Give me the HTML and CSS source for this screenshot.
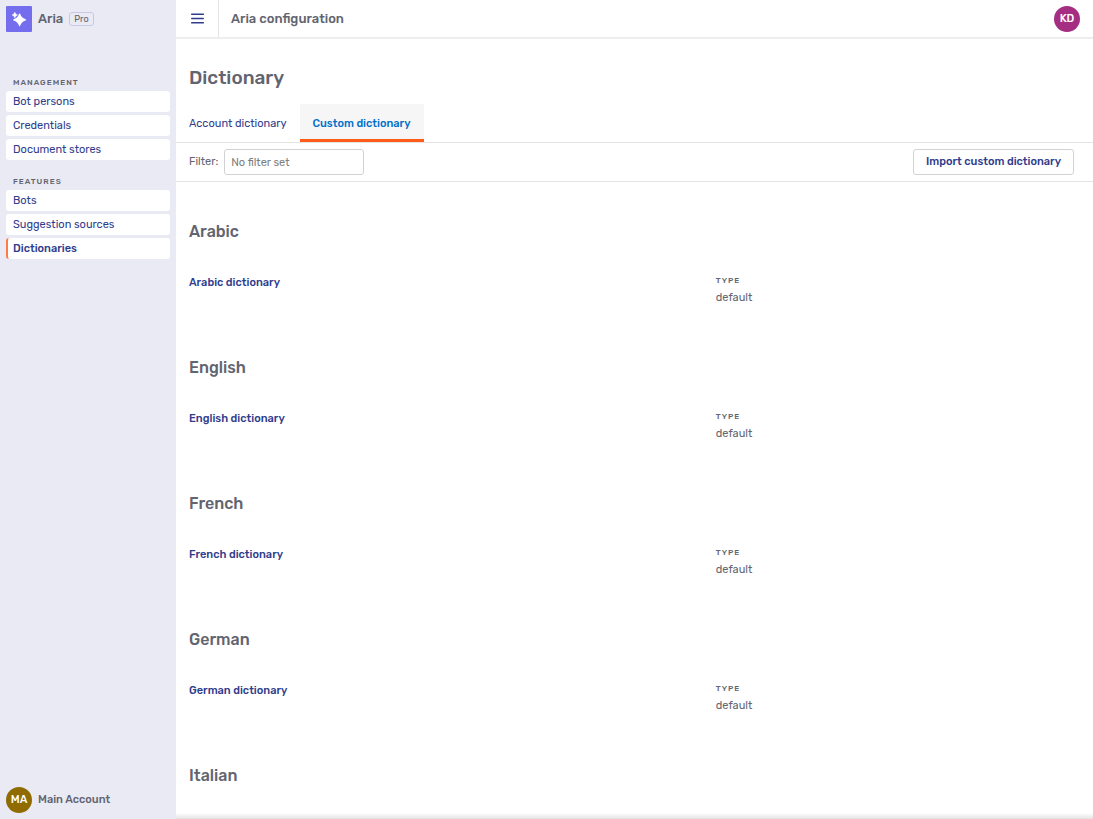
FILE: index.html
```html
<!DOCTYPE html>
<html lang="en">
  <head>
    <meta charset="utf-8">
    <title>Aria configuration</title>
    <link rel="stylesheet" href="styles.css">
  </head>
  <body>
    <aside class="sidebar">
      <div class="brand">
        <svg class="logo" viewBox="0 0 26 26" aria-hidden="true">
          <rect width="26" height="26" rx="1" fill="#746eee" />
          <path d="M13.6 8Q14.9 12.5 19.4 13.8Q14.9 15.1 13.6 19.6Q12.3 15.1 7.8 13.8Q12.3 12.5 13.6 8Z" fill="#fff" stroke="#fff" stroke-width="1.2" stroke-linejoin="round" />
          <path d="M8.8 6.2Q9.3 8.4 11.5 9Q9.3 9.6 8.8 11.8Q8.3 9.6 6.1 9Q8.3 8.4 8.8 6.2Z" fill="#fff" stroke="#fff" stroke-width="0.5" />
        </svg>
        <span class="brand-name">Aria</span>
        <span class="badge">Pro</span>
      </div>

      <nav class="menu">
        <h2 class="label">Management</h2>
        <ul>
          <li><a href="#">Bot persons</a></li>
          <li><a href="#">Credentials</a></li>
          <li><a href="#">Document stores</a></li>
        </ul>
        <h2 class="label">Features</h2>
        <ul>
          <li><a href="#">Bots</a></li>
          <li><a href="#">Suggestion sources</a></li>
          <li><a class="active" href="#">Dictionaries</a></li>
        </ul>
      </nav>

      <div class="account">
        <span class="avatar avatar-account">MA</span>
        <span>Main Account</span>
      </div>
    </aside>

    <div class="page">
      <header class="topbar">
        <button class="menu-btn" aria-label="Menu">
          <svg viewBox="0 0 13 11" aria-hidden="true">
            <path d="M0.7 1.2h11.6M0.7 5.5h11.6M0.7 9.8h11.6" stroke="#303c8c" stroke-width="1.5" stroke-linecap="round" />
          </svg>
        </button>
        <span class="topbar-title">Aria configuration</span>
        <span class="avatar avatar-user">KD</span>
      </header>

      <main class="content">
        <h1>Dictionary</h1>

        <nav class="tabs">
          <a href="#">Account dictionary</a>
          <a class="active" href="#">Custom dictionary</a>
        </nav>

        <div class="toolbar">
          <label for="filter">Filter:</label>
          <input id="filter" type="text" placeholder="No filter set">
          <button class="import-btn">Import custom dictionary</button>
        </div>

        <section class="language">
          <h2>Arabic</h2>
          <div class="row">
            <a href="#">Arabic dictionary</a>
            <dl>
              <dt class="label">Type</dt>
              <dd>default</dd>
            </dl>
          </div>
        </section>

        <section class="language">
          <h2>English</h2>
          <div class="row">
            <a href="#">English dictionary</a>
            <dl>
              <dt class="label">Type</dt>
              <dd>default</dd>
            </dl>
          </div>
        </section>

        <section class="language">
          <h2>French</h2>
          <div class="row">
            <a href="#">French dictionary</a>
            <dl>
              <dt class="label">Type</dt>
              <dd>default</dd>
            </dl>
          </div>
        </section>

        <section class="language">
          <h2>German</h2>
          <div class="row">
            <a href="#">German dictionary</a>
            <dl>
              <dt class="label">Type</dt>
              <dd>default</dd>
            </dl>
          </div>
        </section>

        <section class="language">
          <h2>Italian</h2>
        </section>
      </main>
    </div>
  </body>
</html>
```

FILE: styles.css
```css
* {
  box-sizing: border-box;
}

body {
  display: flex;
  height: 100vh;
  margin: 0;
  background-color: #fff;
  color: #62646f;
  font-family: Rubik, Roboto, sans-serif;
  font-size: 11px;
  line-height: 16px;
}

h1,
h2,
ul,
dl,
dd {
  margin: 0;
  padding: 0;
}

ul {
  list-style: none;
}

a {
  color: #303c8c;
  text-decoration: none;
}

button,
input {
  font: inherit;
}

.label {
  font-size: 8px;
  font-weight: 500;
  line-height: 12px;
  letter-spacing: 1px;
  text-transform: uppercase;
}

.avatar {
  display: flex;
  align-items: center;
  justify-content: center;
  width: 26px;
  height: 26px;
  border-radius: 50%;
  color: #fff;
  font-weight: 500;
}

.avatar-account {
  background-color: #8f6b00;
}

.avatar-user {
  margin-left: auto;
  background-color: #a52e82;
}

/* sidebar */

.sidebar {
  display: flex;
  flex-direction: column;
  flex: none;
  width: 176px;
  padding: 6px;
  background-color: #eaeaf5;
}

.brand,
.account {
  display: flex;
  align-items: center;
  gap: 6px;
}

.account {
  margin-top: auto;
  font-weight: 500;
}

.logo {
  width: 26px;
  height: 26px;
}

.brand-name {
  font-size: 13px;
  font-weight: 500;
}

.badge {
  padding: 0 4px;
  border: 1px solid #c6c9e6;
  border-radius: 3px;
  font-size: 9px;
  line-height: 12px;
}

.menu {
  margin-top: 45px;

  .label {
    padding-left: 7px;
    margin-bottom: 2px;
  }

  ul {
    display: grid;
    gap: 3px;
    margin-bottom: 16px;
  }

  a {
    display: block;
    padding: 3px 7px 2px;
    border-radius: 3px;
    background-color: #fff;
  }

  .active {
    padding-left: 5px;
    border-left: 2px solid #ff7a45;
    font-weight: 500;
  }
}

/* page */

.page {
  display: flex;
  flex-direction: column;
  flex: 1;
  min-width: 0;
}

.topbar {
  display: flex;
  align-items: center;
  flex: none;
  height: 39px;
  padding-right: 13px;
  border-bottom: 2px solid #eee;
}

.menu-btn {
  display: flex;
  align-items: center;
  align-self: stretch;
  justify-content: center;
  width: 43px;
  padding: 0;
  border: 0;
  border-right: 1px solid #e4e4e4;
  background: none;

  svg {
    width: 13px;
    height: 11px;
  }
}

.topbar-title {
  padding-left: 12px;
  font-size: 13px;
  font-weight: 500;
}

.content {
  flex: 1;
  overflow-y: auto;
  scrollbar-width: none;
}

.page::after {
  content: "";
  position: fixed;
  right: 0;
  bottom: 0;
  left: 176px;
  height: 6px;
  background: linear-gradient(transparent, #e2e2e2);
}

h1 {
  padding: 25px 13px 12px;
  font-size: 19px;
  font-weight: 500;
  line-height: 28px;
}

.tabs {
  display: flex;
  border-bottom: 1px solid #e4e4e4;

  a {
    padding: 12px 13px 7px;
    border-bottom: 3px solid transparent;
  }

  .active {
    border-color: #ff5c1a;
    background-color: #f6f6f6;
    color: #0070c9;
    font-weight: 500;
  }
}

.toolbar {
  display: flex;
  align-items: center;
  gap: 6px;
  padding: 6px 19px 6px 13px;
  border-bottom: 1px solid #e4e4e4;

  input {
    width: 140px;
    height: 26px;
    padding: 0 6px;
    border: 1px solid #d2d2d2;
    border-radius: 3px;
  }

  ::placeholder {
    color: #7e7e7e;
  }
}

.import-btn {
  height: 26px;
  padding: 0 12px;
  margin-left: auto;
  border: 1px solid #d2d2d2;
  border-radius: 3px;
  background-color: #fff;
  color: #303c8c;
  font-weight: 500;
}

.language {
  padding: 38px 26px 12px 13px;

  h2 {
    font-size: 16px;
    font-weight: 500;
    line-height: 24px;
  }
}

.row {
  display: grid;
  grid-template-columns: 3fr 2fr;
  margin-top: 31px;

  a {
    font-weight: 500;
  }

  dd {
    margin-top: 3px;
  }
}
```
